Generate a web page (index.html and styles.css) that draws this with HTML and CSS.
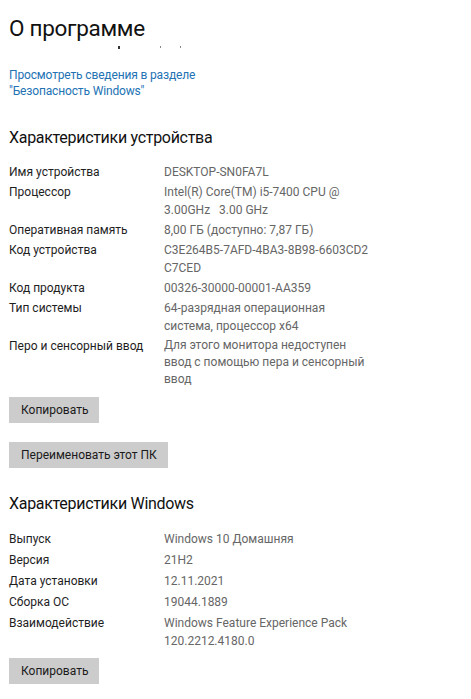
FILE: index.html
```html
<!DOCTYPE html>
<html lang="ru">
<head>
<meta charset="utf-8">
<title>О программе</title>
<link rel="stylesheet" href="styles.css">
</head>
<body>
<div class="page">
  <h1 class="title">О программе</h1>
  <div class="specks"><span class="speck s1"></span><span class="speck s2"></span><span class="speck s3"></span></div>
  <a class="link" href="#">Просмотреть сведения в разделе<br>"Безопасность Windows"</a>

  <h2 class="heading h-dev">Характеристики устройства</h2>
  <div class="specs">
    <div class="label">Имя устройства</div><div class="value">DESKTOP-SN0FA7L</div>
    <div class="label">Процессор</div><div class="value">Intel(R) Core(TM) i5-7400 CPU @<br>3.00GHz&nbsp;&nbsp;&nbsp;3.00 GHz</div>
    <div class="label">Оперативная память</div><div class="value">8,00 ГБ (доступно: 7,87 ГБ)</div>
    <div class="label">Код устройства</div><div class="value">C3E264B5-7AFD-4BA3-8B98-6603CD2<br>C7CED</div>
    <div class="label">Код продукта</div><div class="value">00326-30000-00001-AA359</div>
    <div class="label">Тип системы</div><div class="value">64-разрядная операционная<br>система, процессор x64</div>
    <div class="label">Перо и сенсорный ввод</div><div class="value value-tight">Для этого монитора недоступен<br>ввод с помощью пера и сенсорный<br>ввод</div>
  </div>
  <div class="buttons">
    <button class="btn">Копировать</button>
    <button class="btn">Переименовать этот ПК</button>
  </div>

  <h2 class="heading h-win">Характеристики Windows</h2>
  <div class="specs specs-win">
    <div class="label">Выпуск</div><div class="value">Windows 10 Домашняя</div>
    <div class="label">Версия</div><div class="value">21H2</div>
    <div class="label">Дата установки</div><div class="value">12.11.2021</div>
    <div class="label">Сборка ОС</div><div class="value">19044.1889</div>
    <div class="label">Взаимодействие</div><div class="value">Windows Feature Experience Pack<br>120.2212.4180.0</div>
  </div>
  <div class="buttons buttons-win">
    <button class="btn">Копировать</button>
  </div>
</div>
</body>
</html>
```

FILE: styles.css
```css
html, body {
  margin: 0;
  padding: 0;
  background: #ffffff;
}
body {
  font-family: Roboto, "Open Sans", sans-serif;
  color: #1f1f1f;
  width: 471px;
  height: 699px;
  overflow: hidden;
}
.page {
  padding: 12px 0 0 9px;
}
.title {
  margin: 0;
  font-weight: 400;
  font-size: 22.5px;
  letter-spacing: -0.3px;
  line-height: 32px;
  color: #111;
}
.specks {
  position: relative;
  height: 23px;
}
.speck {
  position: absolute;
  background: #333;
  width: 1px;
  height: 2px;
}
.s1 { left: 109px; top: 2px; height: 3px; width: 2px; }
.s2 { left: 151px; top: 2px; background: #888; }
.s3 { left: 171px; top: 2px; background: #888; }
.link {
  display: block;
  color: #2272b4;
  text-decoration: none;
  font-size: 12px;
  letter-spacing: -0.15px;
  line-height: 16px;
}
.heading {
  margin: 0;
  font-weight: 400;
  font-size: 16px;
  letter-spacing: -0.3px;
  line-height: 24px;
  color: #111;
}
.h-dev { margin-top: 27px; }
.h-win { margin-top: 24px; }
.specs {
  display: grid;
  grid-template-columns: 155px 1fr;
  row-gap: 2px;
  margin-top: 13px;
  font-size: 12px;
  line-height: 18px;
  color: #1a1a1a;
}
.label { color: #1e1e1e; }
.value { color: #666666; }
.value-tight { line-height: 17px; }
.specs-win { row-gap: 3px; margin-top: 14px; }
.buttons {
  display: flex;
  flex-direction: column;
  align-items: flex-start;
  gap: 19px;
  margin-top: 9px;
}
.btn {
  font-family: inherit;
  font-size: 12px;
  color: #1a1a1a;
  background: #cccccc;
  border: 0;
  border-radius: 0;
  height: 26px;
  padding: 0 11px 0 12px;
  margin: 0;
}
.buttons-win { margin-top: 8px; }
```
